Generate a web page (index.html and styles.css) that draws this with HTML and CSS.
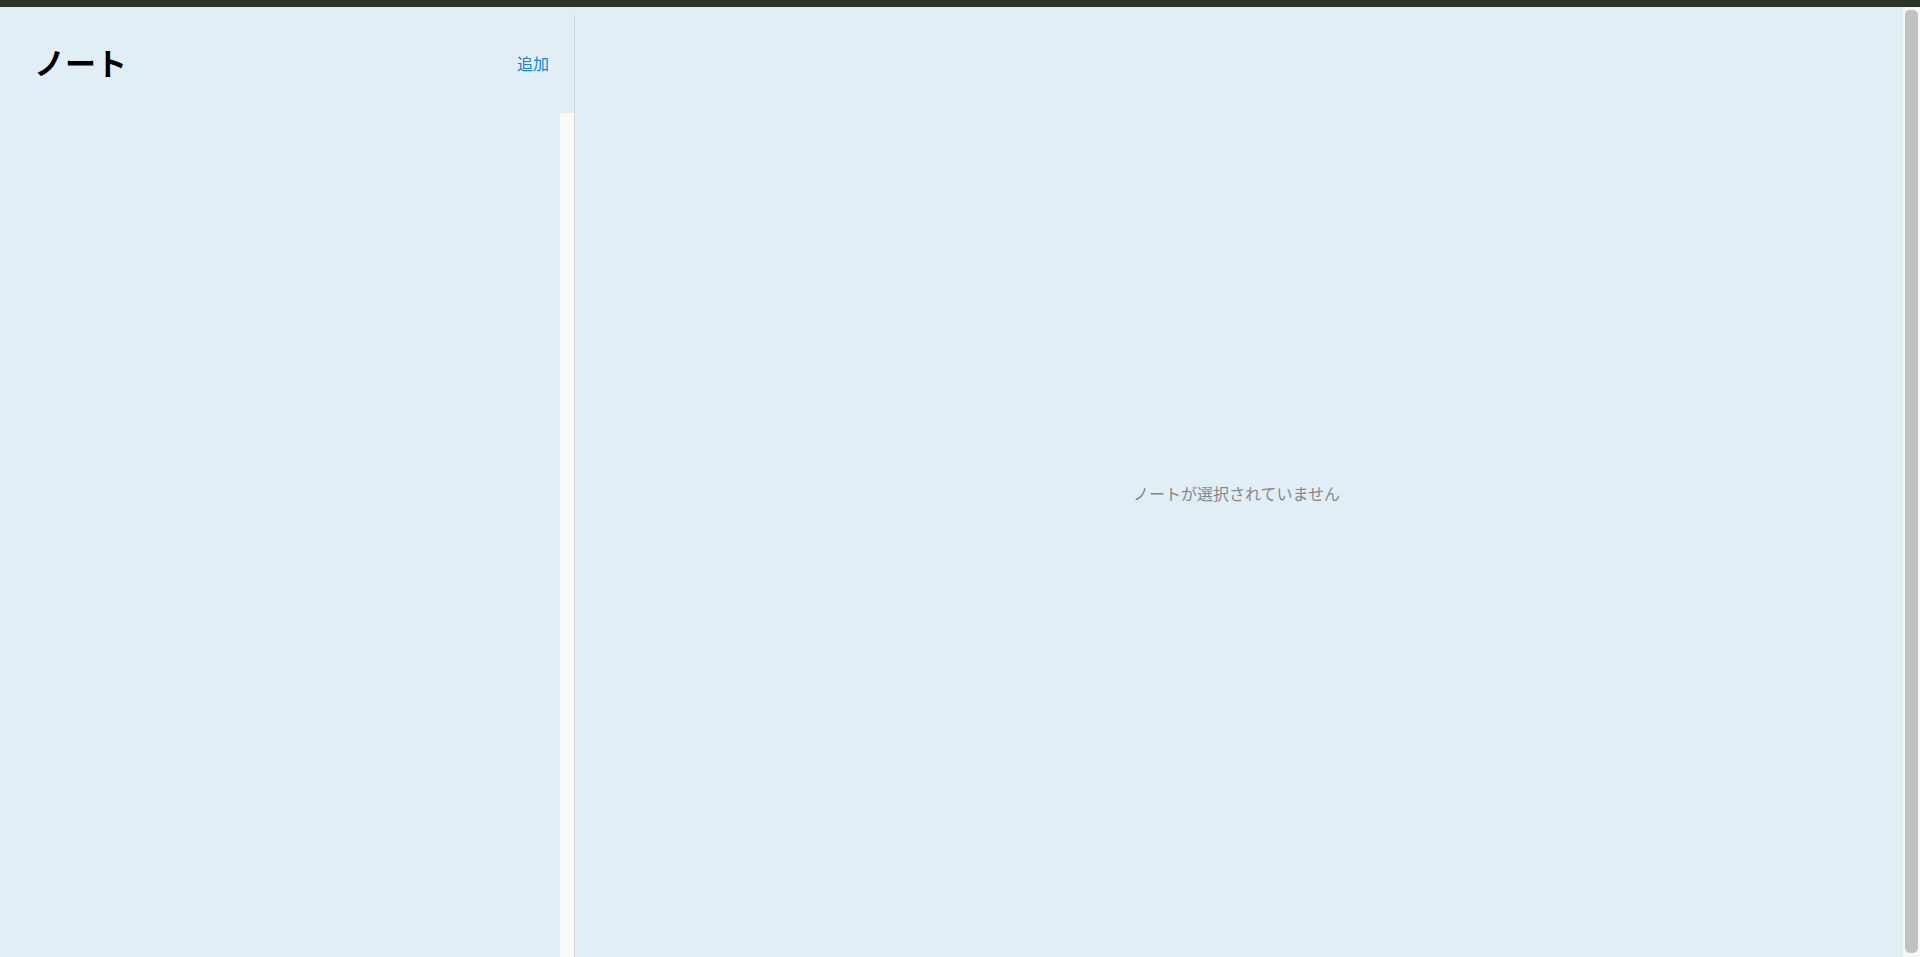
FILE: index.html
```html
<!DOCTYPE html>
<html lang="ja">
<head>
<meta charset="utf-8">
<title>ノート</title>
<link rel="stylesheet" href="styles.css">
</head>
<body>
<div class="topbar"></div>
<div class="viewport">
  <div class="page">
    <div class="app">
      <aside class="sidebar">
        <header class="sidebar-header">
          <h1 class="title">ノート</h1>
          <button class="add-btn" type="button">追加</button>
        </header>
        <div class="note-list">
          <div class="note-items"></div>
          <div class="list-scrollbar"></div>
        </div>
      </aside>
      <main class="main">
        <p class="empty">ノートが選択されていません</p>
      </main>
    </div>
  </div>
  <div class="page-scrollbar"><div class="page-thumb"></div></div>
</div>
</body>
</html>
```
FILE: styles.css
```css
html, body {
  margin: 0;
  height: 100%;
  overflow: hidden;
}
body {
  display: flex;
  flex-direction: column;
  background: #e1eef6;
  font-family: "Noto Sans CJK JP", "Noto Sans", sans-serif;
  color: #000;
}
.topbar {
  height: 7px;
  flex: none;
  background: #2c3428;
}
.viewport {
  flex: 1;
  display: flex;
  min-height: 0;
}
.page {
  flex: 1;
  min-width: 0;
  overflow: hidden;
}
.app {
  display: flex;
  height: 957px;
  margin-top: 8px;
}
.sidebar {
  width: 574px;
  flex: none;
  display: flex;
  flex-direction: column;
  border-right: 1px solid #d3d6d8;
}
.sidebar-header {
  height: 98px;
  flex: none;
  box-sizing: border-box;
  display: flex;
  align-items: center;
  justify-content: space-between;
  padding: 0 25px 3px 34px;
}
.title {
  margin: 0 0 3px 0;
  font-size: 31px;
  font-weight: 700;
  line-height: 1;
}
.add-btn {
  border: none;
  background: none;
  padding: 0;
  font-family: inherit;
  font-size: 16px;
  color: #1684c6;
  cursor: pointer;
  line-height: 1;
}
.note-list {
  flex: 1;
  display: flex;
  min-height: 0;
}
.note-items {
  flex: 1;
}
.list-scrollbar {
  width: 14px;
  flex: none;
  background: #fafafa;
  border-left: 1px solid #ececec;
}
.main {
  flex: 1;
  display: flex;
  align-items: center;
  justify-content: center;
  padding: 0 4px 2px 0;
}
.empty {
  margin: 0;
  font-size: 16px;
  color: #878787;
}
.page-scrollbar {
  width: 13px;
  flex: none;
  background: #f7f7f7;
  border-left: 1px solid #ebebeb;
  padding: 3px 2px 4px 2px;
  display: flex;
}
.page-thumb {
  flex: 1;
  background: #c1c1c1;
  border-radius: 5px;
}
```
